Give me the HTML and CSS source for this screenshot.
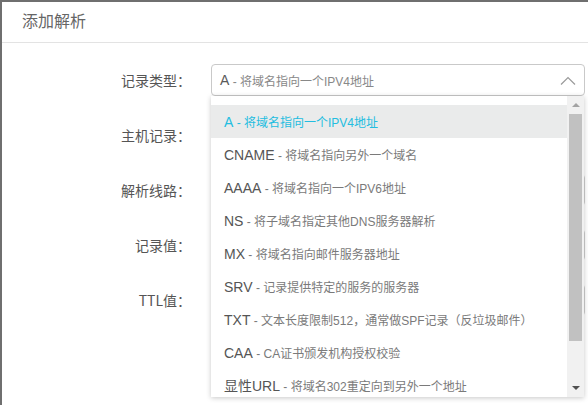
FILE: index.html
```html
<!DOCTYPE html>
<html lang="zh-CN">
<head>
<meta charset="utf-8">
<title>添加解析</title>
<link rel="stylesheet" href="styles.css">
</head>
<body>
<div class="dialog">
  <div class="header">添加解析</div>
  <div class="form">
    <div class="row">
      <div class="label">记录类型：</div>
      <div class="field select">
        <span class="sel-code">A</span><span class="sel-desc">&nbsp;- 将域名指向一个IPV4地址</span>
        <svg class="chev" width="16" height="9" viewBox="0 0 16 9"><path d="M1 8.5 L8 1.5 L15 8.5" fill="none" stroke="#9a9a9a" stroke-width="1.2"/></svg>
        <div class="dropdown">
          <ul class="list">
            <li class="item active"><span class="code">A</span><span class="desc"> - 将域名指向一个IPV4地址</span></li>
            <li class="item"><span class="code">CNAME</span><span class="desc"> - 将域名指向另外一个域名</span></li>
            <li class="item"><span class="code">AAAA</span><span class="desc"> - 将域名指向一个IPV6地址</span></li>
            <li class="item"><span class="code">NS</span><span class="desc"> - 将子域名指定其他DNS服务器解析</span></li>
            <li class="item"><span class="code">MX</span><span class="desc"> - 将域名指向邮件服务器地址</span></li>
            <li class="item"><span class="code">SRV</span><span class="desc"> - 记录提供特定的服务的服务器</span></li>
            <li class="item"><span class="code">TXT</span><span class="desc"> - 文本长度限制512，通常做SPF记录（反垃圾邮件）</span></li>
            <li class="item"><span class="code">CAA</span><span class="desc"> - CA证书颁发机构授权校验</span></li>
            <li class="item"><span class="code">显性URL</span><span class="desc"> - 将域名302重定向到另外一个地址</span></li>
          </ul>
          <div class="scrollbar">
            <div class="sb-btn"><span class="tri-up"></span></div>
            <div class="sb-thumb"></div>
            <div class="sb-space"></div>
            <div class="sb-btn"><span class="tri-down"></span></div>
          </div>
        </div>
      </div>
    </div>
    <div class="row">
      <div class="label">主机记录：</div>
      <div class="field plain"><span class="caret"></span></div>
    </div>
    <div class="row">
      <div class="label">解析线路：</div>
      <div class="field input"></div>
    </div>
    <div class="row">
      <div class="label">记录值：</div>
      <div class="field input"></div>
    </div>
    <div class="row">
      <div class="label">TTL值：</div>
      <div class="field input"></div>
    </div>
  </div>
</div>
</body>
</html>
```

FILE: styles.css
```css
* { box-sizing: border-box; }
html, body { margin: 0; padding: 0; background: #fff; }
body {
  font-family: "Liberation Sans", "Noto Sans CJK SC", sans-serif;
  color: #333;
  overflow: hidden;
}
.dialog {
  height: 405px;
  border-top: 2px solid #6f6f6f;
  border-left: 2px solid #6f6f6f;
}
.header {
  height: 41px;
  line-height: 40px;
  padding-left: 20px;
  font-size: 16px;
  color: #666;
  border-bottom: 1px solid #e3e3e3;
}
.form {
  padding-top: 21px;
}
.row {
  display: flex;
  align-items: center;
  height: 32px;
  margin-bottom: 23px;
}
.label {
  width: 189px;
  margin-right: 20px;
  text-align: right;
  font-size: 14px;
  color: #555;
  font-family: "Noto Sans CJK SC", "Liberation Sans", sans-serif;
}
.field {
  width: 374px;
  height: 32px;
  flex: none;
}
.input {
  border: 1px solid #cfcfcf;
  border-radius: 4px;
}
.plain {
  display: flex;
  align-items: center;
  justify-content: flex-end;
  padding-right: 1px;
}
.caret {
  width: 2px;
  height: 8px;
  background: #444;
}
.select {
  position: relative;
  display: flex;
  align-items: center;
  border: 1px solid #c9c9c9;
  border-radius: 4px;
  padding-left: 8px;
  white-space: nowrap;
}
.sel-code { font-size: 14px; color: #5a5a5a; }
.sel-desc { font-size: 12px; color: #888; }
.chev { margin-left: auto; margin-right: 8px; }
.dropdown {
  position: absolute;
  top: 31px;
  left: -1px;
  width: 373px;
  height: 301px;
  background: #fff;
  box-shadow: 0 1px 5px rgba(0, 0, 0, 0.22);
  display: flex;
  z-index: 2;
}
.list {
  list-style: none;
  margin: 0;
  padding: 9px 0 0;
  flex: 1;
  overflow: hidden;
}
.item {
  height: 33px;
  line-height: 33px;
  padding-left: 13px;
  white-space: nowrap;
}
.item .code { font-size: 14px; color: #555; }
.item .desc { font-size: 12px; color: #7a7a7a; }
.item.active { background: #eaebeb; }
.item.active .code, .item.active .desc { color: #22bde0; }
.scrollbar {
  width: 17px;
  background: #f1f1f1;
  display: flex;
  flex-direction: column;
}
.sb-btn {
  height: 18px;
  display: flex;
  align-items: center;
  justify-content: center;
}
.sb-thumb {
  height: 227px;
  margin: 0 2px;
  background: #c1c1c1;
}
.sb-space { flex: 1; }
.tri-up {
  width: 0; height: 0;
  border-left: 4px solid transparent;
  border-right: 4px solid transparent;
  border-bottom: 4px solid #a3a3a3;
}
.tri-down {
  width: 0; height: 0;
  border-left: 4px solid transparent;
  border-right: 4px solid transparent;
  border-top: 4px solid #505050;
}
```
